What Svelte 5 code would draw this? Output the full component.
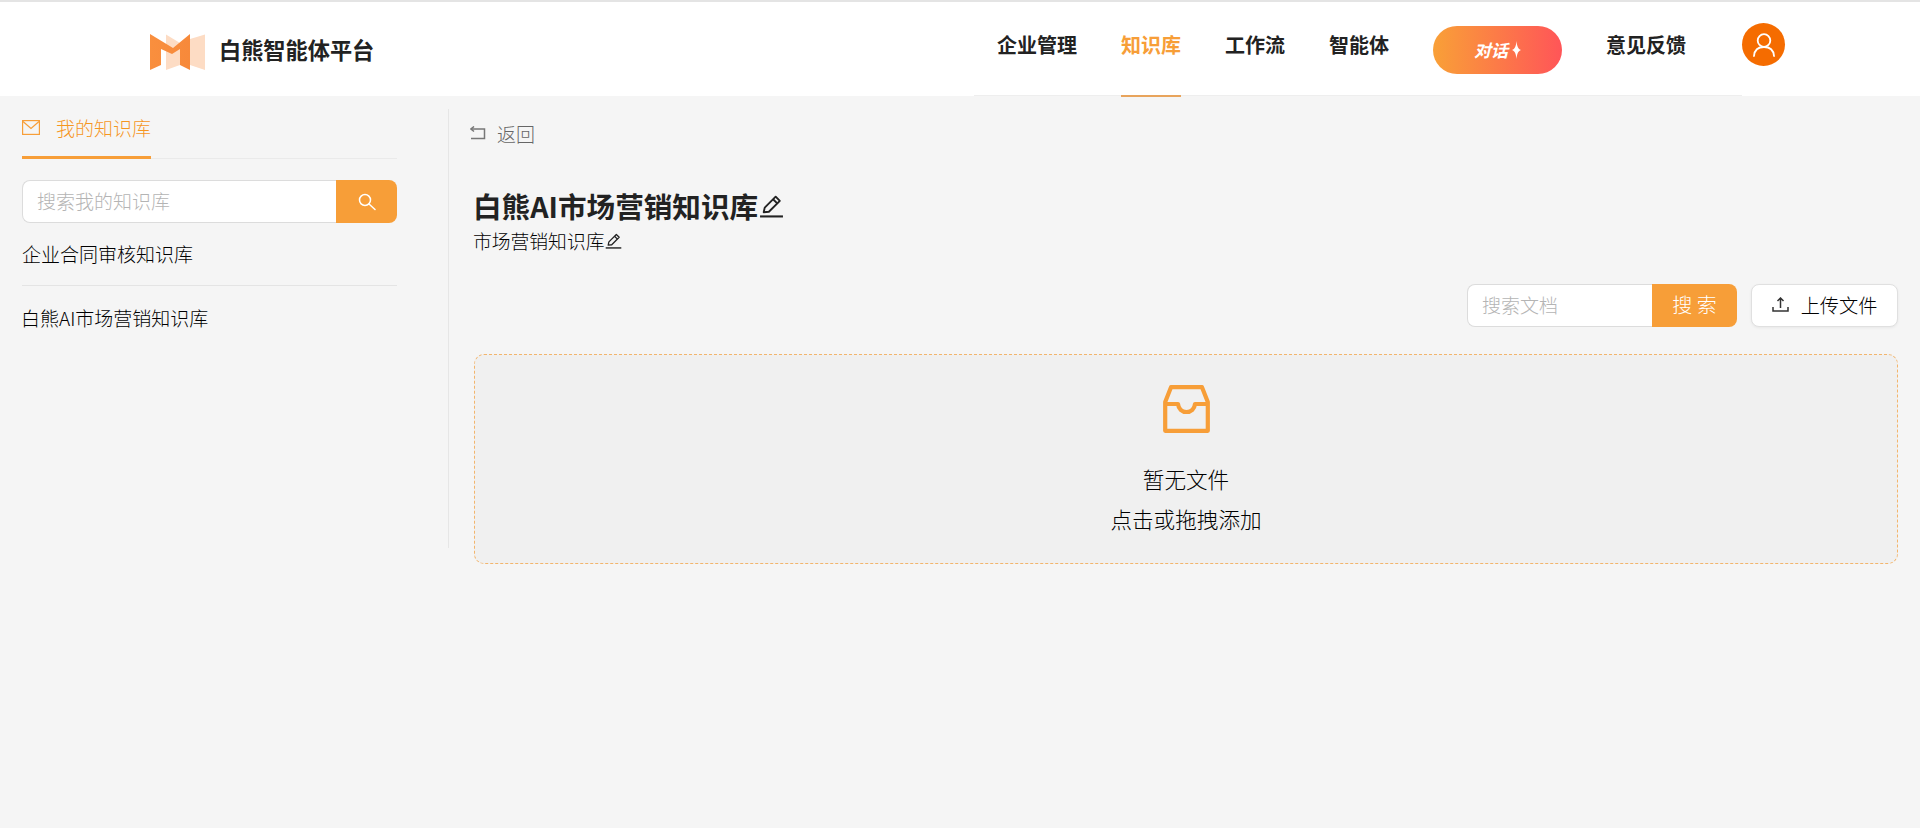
<script lang="ts">
    const navItems = [
        { label: '企业管理', active: false },
        { label: '知识库', active: true },
        { label: '工作流', active: false },
        { label: '智能体', active: false }
    ]
    const knowledgeBases = ['企业合同审核知识库', '白熊AI市场营销知识库']
</script>

{#snippet pencil(size)}
    <svg class="pencil" width={size} height={size} viewBox="0 0 24 24" fill="none" stroke="currentColor">
        <path d="M4.5 18.5 L5.5 14 L16 3.5 L20 7.5 L9.5 18 Z" stroke-width="1.8" stroke-linejoin="round" />
        <path d="M13.5 6 L17.5 10" stroke-width="1.8" />
        <path d="M1 22.5 H23" stroke-width="2" />
    </svg>
{/snippet}

<div class="page">
    <header class="header">
        <div class="brand">
            <svg class="logo" width="56" height="36" viewBox="0 0 56 36">
                <defs>
                    <linearGradient id="logo-fill" x1="0" y1="0" x2="1" y2="0">
                        <stop offset="0" stop-color="#f98f3e" />
                        <stop offset="1" stop-color="#f7893a" />
                    </linearGradient>
                </defs>
                <path d="M16 0.5 L30 9 L30 31 L16 36 Z" fill="#fddcc4" />
                <path d="M40 5 L55 0.5 L55 36 L40 31 Z" fill="#fddcc4" />
                <path d="M0 0 L23 14 L40 0 L40 36 L30 31 L30 15 L22 20 L11 15 L11 31 L0 36 Z" fill="url(#logo-fill)" />
            </svg>
            <span class="brand-name">白熊智能体平台</span>
        </div>

        <nav class="nav">
            {#each navItems as item}
                <a class="nav-item" class:active={item.active}>{item.label}</a>
            {/each}
            <button class="chat-btn">
                <span>对话</span>
                <svg width="9" height="18" viewBox="0 0 9 18"><path d="M4.5 0 C5 5 6 8 9 9 C6 10 5 13 4.5 18 C4 13 3 10 0 9 C3 8 4 5 4.5 0 Z" fill="#fff" /></svg>
            </button>
            <a class="nav-item">意见反馈</a>
        </nav>

        <div class="avatar">
            <svg width="22" height="24" viewBox="0 0 22 24" fill="none" stroke="#fff" stroke-width="1.8">
                <circle cx="11" cy="7.5" r="6.3" />
                <path d="M1 23 C1.5 17 5.5 14 11 14 C16.5 14 20.5 17 21 23" stroke-linecap="round" />
            </svg>
        </div>
    </header>

    <div class="body">
        <aside class="sidebar">
            <div class="tabs">
                <div class="tab">
                    <svg width="18" height="15" viewBox="0 0 18 15" fill="none" stroke="#f79e38" stroke-width="1.2">
                        <rect x="0.6" y="0.6" width="16.8" height="13.8" />
                        <path d="M1 1.5 L9 8.5 L17 1.5" />
                    </svg>
                    <span>我的知识库</span>
                </div>
            </div>

            <div class="side-search">
                <input class="side-input" placeholder="搜索我的知识库" />
                <button class="side-btn" aria-label="搜索">
                    <svg width="18" height="18" viewBox="0 0 18 18" fill="none" stroke="#fff" stroke-width="1.5">
                        <circle cx="7" cy="7" r="5.5" />
                        <path d="M11 11 L17 16.5" stroke-linecap="round" />
                    </svg>
                </button>
            </div>

            <ul class="kb-list">
                {#each knowledgeBases as name}
                    <li>{name}</li>
                {/each}
            </ul>
        </aside>

        <main class="main">
            <div class="back">
                <svg width="16" height="14" viewBox="0 0 16 14" fill="none" stroke="#777" stroke-width="1.5">
                    <path d="M1 3 H14.5 V12.5 H1" />
                    <path d="M4 0.5 L1 3 L4 5.5" />
                </svg>
                <span>返回</span>
            </div>

            <h1 class="title">白熊AI市场营销知识库{@render pencil(25)}</h1>
            <p class="subtitle">市场营销知识库{@render pencil(17)}</p>

            <div class="toolbar">
                <div class="doc-search">
                    <input class="doc-input" placeholder="搜索文档" />
                    <button class="doc-btn">搜 索</button>
                </div>
                <button class="upload-btn">
                    <svg width="17" height="15" viewBox="0 0 17 15" fill="none" stroke="#333" stroke-width="1.5">
                        <path d="M8.5 11 V1.5 M5.5 4 L8.5 1 L11.5 4" />
                        <path d="M1 10 V14 H16 V10" />
                    </svg>
                    <span>上传文件</span>
                </button>
            </div>

            <div class="dropzone">
                <svg width="47" height="48" viewBox="0 0 47 48" fill="none" stroke="#f79e38" stroke-width="4.2" stroke-linejoin="round">
                    <path d="M8 2.2 H39 L44.8 17 V45.8 H2.2 V17 Z" />
                    <path d="M2 19 H15 C15.5 24 19 27 23.5 27 C28 27 31.5 24 32 19 H45" />
                </svg>
                <p class="empty-title">暂无文件</p>
                <p class="empty-hint">点击或拖拽添加</p>
            </div>
        </main>
    </div>
</div>

<style>
    :global(body) {
        background: #f5f5f5;
        font-family: "Noto Sans CJK SC", "Liberation Sans", sans-serif;
    }

    .page {
        min-height: 828px;
        color: #222;
    }

    .header {
        display: flex;
        align-items: flex-start;
        height: 94px;
        background: #fff;
        border-top: 2px solid #e4e4e4;
    }

    .brand {
        display: flex;
        align-items: center;
        gap: 13px;
        height: 94px;
        margin-left: 150px;
        padding-top: 5px;
        box-sizing: border-box;
    }

    .brand-name {
        margin-bottom: 6px;
        font-size: 22.2px;
        font-weight: 700;
        color: #222;
    }

    .nav {
        display: flex;
        align-items: center;
        height: 93px;
        margin-left: auto;
        padding: 0 0 0 23px;
        width: 745px;
        gap: 44px;
        border-bottom: 1px solid #eee;
    }

    .nav-item {
        position: relative;
        display: flex;
        align-items: center;
        height: 93px;
        padding-bottom: 8px;
        box-sizing: border-box;
        font-size: 20px;
        font-weight: 700;
        color: #222;
    }

    .nav-item.active {
        color: #f79e38;
    }

    .nav-item.active::after {
        content: '';
        position: absolute;
        left: 0;
        right: 0;
        bottom: -2px;
        height: 2px;
        background: #e8a45c;
    }

    .chat-btn {
        display: flex;
        align-items: center;
        justify-content: center;
        gap: 4px;
        width: 129px;
        height: 48px;
        margin-top: 2px;
        border: none;
        border-radius: 24px;
        background: linear-gradient(90deg, #f9a037, #ff5558);
        color: #fff;
        font-family: inherit;
        font-size: 17px;
        font-weight: 700;
        font-style: italic;
    }

    .avatar {
        display: flex;
        align-items: center;
        justify-content: center;
        width: 43px;
        height: 43px;
        margin: 21px 135px 0 0;
        border-radius: 50%;
        background: #f56c00;
    }

    .body {
        display: flex;
        align-items: flex-start;
    }

    .sidebar {
        box-sizing: border-box;
        width: 449px;
        height: 439px;
        margin-top: 13px;
        padding: 0 51px 0 22px;
        border-right: 1px solid #e6e6e6;
        font-weight: 300;
    }

    .tabs {
        height: 50px;
        border-bottom: 1px solid #eaeaea;
        box-sizing: border-box;
    }

    .tab {
        display: inline-flex;
        align-items: center;
        gap: 16px;
        box-sizing: border-box;
        height: 50px;
        padding: 0 0 10px;
        border-bottom: 3px solid #f79e38;
        color: #f5961f;
        font-size: 19px;
    }

    .side-search {
        display: flex;
        height: 43px;
        margin-top: 21px;
    }

    .side-input,
    .doc-input {
        flex: 1;
        min-width: 0;
        box-sizing: border-box;
        padding: 0 14px 2px;
        border: 1px solid #dcdcdc;
        border-right: none;
        border-radius: 8px 0 0 8px;
        background: #fff;
        font-family: inherit;
        font-size: 19px;
        font-weight: 300;
    }

    .side-input::placeholder,
    .doc-input::placeholder {
        color: #b4b4b4;
    }

    .side-btn {
        display: flex;
        align-items: center;
        justify-content: center;
        width: 61px;
        border: none;
        border-radius: 0 8px 8px 0;
        background: #f79e38;
    }

    .kb-list {
        margin: 0;
        padding: 0;
        list-style: none;
    }

    .kb-list li {
        box-sizing: border-box;
        font-size: 19px;
        color: #000;
    }

    .kb-list li:first-child {
        height: 63px;
        line-height: 62px;
        border-bottom: 1px solid #e4e4e4;
    }

    .kb-list li:last-child {
        height: 65px;
        line-height: 63px;
        margin-left: -1px;
    }

    .main {
        flex: 1;
        min-width: 0;
        padding: 0 22px 0 25px;
        font-weight: 300;
    }

    .back {
        display: flex;
        align-items: center;
        gap: 11px;
        height: 28px;
        margin: 23px 0 0 -4px;
        color: #666;
        font-size: 19px;
    }

    .title {
        display: flex;
        align-items: center;
        gap: 1px;
        height: 36px;
        margin: 40px 0 0 -1px;
        font-size: 28.6px;
        font-weight: 700;
        color: #222;
    }

    .subtitle {
        display: flex;
        align-items: center;
        gap: 1px;
        height: 28px;
        margin: 3px 0 0 -1px;
        font-size: 18.8px;
        color: #000;
    }

    .pencil {
        flex: none;
        color: #222;
    }

    .toolbar {
        display: flex;
        justify-content: flex-end;
        gap: 14px;
        margin-top: 30px;
    }

    .doc-search {
        display: flex;
        width: 270px;
        height: 43px;
    }

    .doc-btn {
        width: 85px;
        padding: 0 0 2px;
        border: none;
        border-radius: 0 8px 8px 0;
        background: #f79e38;
        color: #fff;
        font-family: inherit;
        font-size: 20px;
        font-weight: 300;
    }

    .upload-btn {
        display: flex;
        align-items: center;
        justify-content: center;
        gap: 12px;
        width: 147px;
        height: 43px;
        padding: 0 0 2px;
        border: 1px solid #e0e0e0;
        border-radius: 8px;
        background: #fff;
        color: #000;
        font-family: inherit;
        font-size: 19.2px;
        font-weight: 300;
        box-shadow: 0 1px 3px rgba(0, 0, 0, 0.06);
    }

    .dropzone {
        display: flex;
        flex-direction: column;
        align-items: center;
        box-sizing: border-box;
        height: 210px;
        margin-top: 27px;
        padding-top: 30px;
        border: 1px dashed #f3b56c;
        border-radius: 10px;
        background: #f0f0f0;
    }

    .empty-title,
    .empty-hint {
        margin: 0;
        font-size: 21.6px;
        line-height: 40px;
        color: #000;
    }

    .empty-title {
        margin-top: 26px;
    }
</style>
